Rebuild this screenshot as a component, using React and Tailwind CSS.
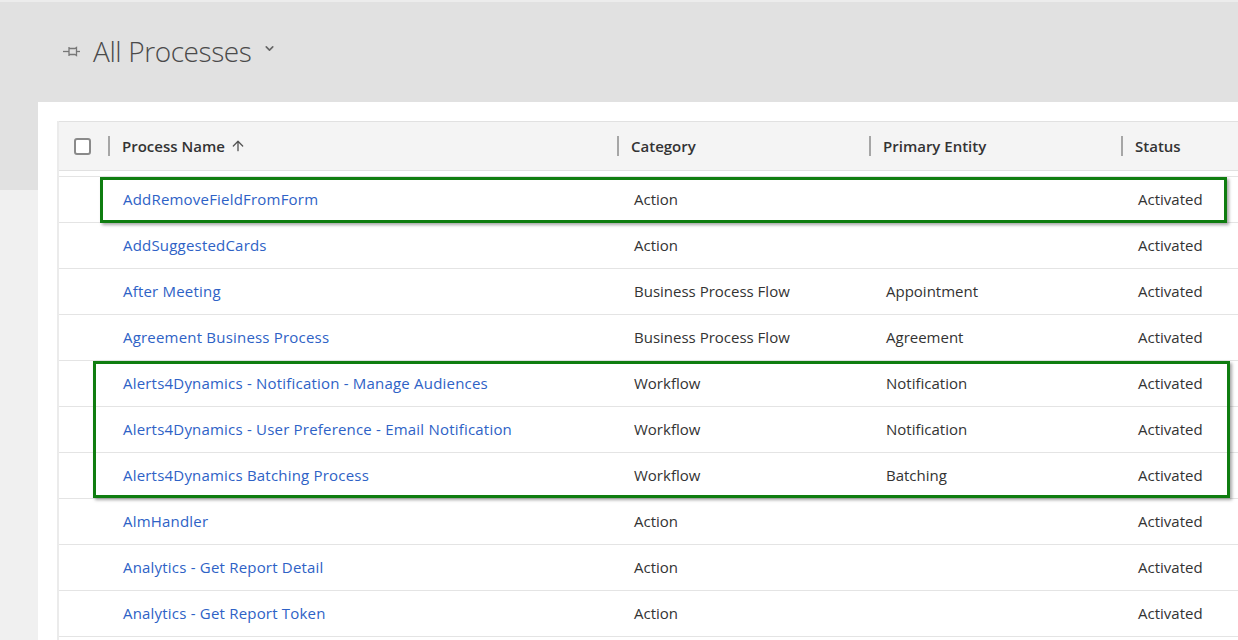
import React from 'react';
import { ChevronDown, ArrowUp } from 'lucide-react';

const rows = [
  { name: 'AddRemoveFieldFromForm', category: 'Action', entity: '', status: 'Activated' },
  { name: 'AddSuggestedCards', category: 'Action', entity: '', status: 'Activated' },
  { name: 'After Meeting', category: 'Business Process Flow', entity: 'Appointment', status: 'Activated' },
  { name: 'Agreement Business Process', category: 'Business Process Flow', entity: 'Agreement', status: 'Activated' },
  { name: 'Alerts4Dynamics - Notification - Manage Audiences', category: 'Workflow', entity: 'Notification', status: 'Activated' },
  { name: 'Alerts4Dynamics - User Preference - Email Notification', category: 'Workflow', entity: 'Notification', status: 'Activated' },
  { name: 'Alerts4Dynamics Batching Process', category: 'Workflow', entity: 'Batching', status: 'Activated' },
  { name: 'AlmHandler', category: 'Action', entity: '', status: 'Activated' },
  { name: 'Analytics - Get Report Detail', category: 'Action', entity: '', status: 'Activated' },
  { name: 'Analytics - Get Report Token', category: 'Action', entity: '', status: 'Activated' },
];

const Pin = () => (
  <svg width="20" height="12" viewBox="0 0 20 12" fill="none" stroke="#777" strokeWidth="1.3">
    <path d="M1 6.5H7" />
    <path d="M7 2V11" />
    <path d="M7 3.5H13L14.5 2.5V10.5L13 9.5H7" />
    <path d="M14.5 6.5H18" />
  </svg>
);

const HeaderCell = ({ children, className = '' }) => (
  <div className={`flex items-center h-full ${className}`}>
    <span className="w-[2px] h-[20px] bg-[#a6a6a6]" />
    <span className="pl-[12px] text-[15px] font-semibold text-[#333] flex items-center gap-[5px]">{children}</span>
  </div>
);

export default function App() {
  return (
    <div
      className="relative w-[1238px] h-[640px] overflow-hidden bg-[#f0f0f0] border-t-2 border-[#ececec]"
      style={{ fontFamily: '"Segoe UI", "Open Sans", sans-serif' }}
    >
      {/* title band */}
      <div className="h-[100px] bg-[#e1e1e1] flex items-center pl-[62px] pb-[2px]">
        <Pin />
        <h1 className="ml-[11px] text-[28px] font-light text-[#4a4a4a] tracking-[-0.4px]">All Processes</h1>
        <ChevronDown className="ml-[12px] mt-[-6px] text-[#666]" size={13} strokeWidth={3} />
      </div>

      <div className="flex">
        <div className="w-[38px] shrink-0">
          <div className="h-[88px] bg-[#e1e1e1]" />
        </div>

        <div className="flex-1 bg-white h-[538px] pl-[19px] pt-[19px]">
          <div className="border-l-2 border-[#ebebeb] h-full">
            {/* header */}
            <div className="h-[50px] bg-[#f4f4f4] border-y border-[#e1e1e1] flex items-center">
              <div className="w-[49px] h-full flex items-center pl-[15px]">
                <span className="w-[17px] h-[17px] border-2 border-[#8a8a8a] rounded-[3px] bg-white" />
              </div>
              <HeaderCell className="w-[509px]">
                Process Name <ArrowUp size={16} strokeWidth={2} className="text-[#555]" />
              </HeaderCell>
              <HeaderCell className="w-[252px]">Category</HeaderCell>
              <HeaderCell className="w-[252px]">Primary Entity</HeaderCell>
              <HeaderCell className="flex-1">Status</HeaderCell>
            </div>

            {/* body */}
            <div className="mt-[5px] border-t border-[#e4e4e4]">
              {rows.map((r) => (
                <div key={r.name} className="h-[46px] border-b border-[#e4e4e4] flex items-center text-[15px] text-[#333]">
                  <div className="w-[49px]" />
                  <div className="w-[510px] pl-[15px] text-[#2e62c6] whitespace-nowrap tracking-[0.2px]">{r.name}</div>
                  <div className="w-[252px] pl-[16px] whitespace-nowrap">{r.category}</div>
                  <div className="w-[252px] pl-[16px] whitespace-nowrap">{r.entity}</div>
                  <div className="flex-1 pl-[16px] whitespace-nowrap">{r.status}</div>
                </div>
              ))}
            </div>
          </div>
        </div>
      </div>

      {/* highlight annotations */}
      <div className="absolute left-[100px] top-[175px] w-[1127px] h-[46px] border-[3px] border-[#0f7d10] shadow-[2px_2px_3px_rgba(0,0,0,0.35)]" />
      <div className="absolute left-[93px] top-[359px] w-[1137px] h-[137px] border-[3px] border-[#0f7d10] shadow-[2px_2px_3px_rgba(0,0,0,0.35)]" />
    </div>
  );
}
